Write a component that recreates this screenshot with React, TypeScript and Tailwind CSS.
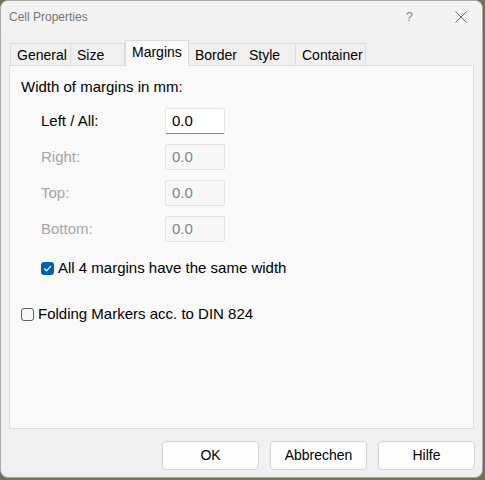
import React from 'react';

const tabs = [
  { label: 'General', w: 'w-[61px]', border: 'border-l border-r' },
  { label: 'Size', w: 'w-[54px]', border: 'border-r' },
  { label: 'Margins', w: 'w-[64px]', active: true },
  { label: 'Border', w: 'w-[54px]', border: '' },
  { label: 'Style', w: 'w-[53px]', border: 'border-r' },
  { label: 'Container', w: 'w-[70px]', border: 'border-r' },
];

const rows = [
  { label: 'Left / All:', enabled: true },
  { label: 'Right:', enabled: false },
  { label: 'Top:', enabled: false },
  { label: 'Bottom:', enabled: false },
];

const CheckMark = () => (
  <svg width="9" height="9" viewBox="0 0 9 9" fill="none">
    <path d="M1.5 4.8 L3.6 6.8 L7.6 2.3" stroke="white" strokeWidth="1.2" strokeLinecap="round" strokeLinejoin="round" />
  </svg>
);

export default function App() {
  return (
    <div className="w-[485px] h-[480px] bg-[#6d7459] font-['Liberation_Sans',Arial,sans-serif]">
      <div className="w-[483px] h-[478px] bg-[#f0f0f0] border border-[#a9a9a9] rounded-[8px] flex flex-col overflow-hidden">
        {/* title bar */}
        <div className="h-[31px] flex items-center pl-[8px] bg-[#f3f3f3] text-[12px] text-[#767676]">
          <span>Cell Properties</span>
          <span className="ml-auto mr-[42px] text-[13px] text-[#8a8a8a]">?</span>
          <svg width="12" height="12" viewBox="0 0 12 12" className="mr-[15px]">
            <path d="M0.5 0.5 L11.5 11.5 M11.5 0.5 L0.5 11.5" stroke="#666" strokeWidth="1" />
          </svg>
        </div>

        {/* tabs */}
        <div className="ml-[9px] mt-[8px] h-[25px] flex items-end text-[14px] text-black">
          {tabs.map((t) =>
            t.active ? (
              <div
                key={t.label}
                className={`${t.w} h-[26px] -mb-px relative z-10 bg-[#f9f9f9] border border-b-0 border-[#dcdcdc] flex items-center pl-[6px] pb-[2px]`}
              >
                {t.label}
              </div>
            ) : (
              <div
                key={t.label}
                className={`${t.w} h-[22px] border-t ${t.border} border-[#dcdcdc] flex items-center pl-[6px] pt-[1px]`}
              >
                {t.label}
              </div>
            )
          )}
        </div>

        {/* page */}
        <div className="ml-[8px] mr-[8px] h-[364px] bg-[#f9f9f9] border border-[#dcdcdc] text-[15px] text-black flex flex-col">
          <div className="mt-[12px] pl-[11px] leading-[18px]">Width of margins in mm:</div>

          <div className="mt-[12px] flex flex-col gap-[10px] pl-[31px]">
            {rows.map((r) => (
              <div key={r.label} className="flex items-center h-[26px]">
                <span className={`w-[124px] ${r.enabled ? 'text-black' : 'text-[#a6a6a6]'}`}>{r.label}</span>
                <div
                  className={
                    r.enabled
                      ? 'w-[60px] h-[26px] bg-white border border-[#e5e5e5] border-b-[#8a8a8a] rounded-[2px] flex items-center pl-[6px] text-black'
                      : 'w-[60px] h-[26px] bg-[#f7f7f7] border border-[#e3e3e3] rounded-[2px] flex items-center pl-[6px] text-[#7c8593]'
                  }
                >
                  0.0
                </div>
              </div>
            ))}
          </div>

          <div className="mt-[17px] pl-[31px] h-[18px] flex items-center">
            <div className="w-[13px] h-[13px] rounded-[3px] bg-[#005fb8] flex items-center justify-center">
              <CheckMark />
            </div>
            <span className="ml-[4px]">All 4 margins have the same width</span>
          </div>

          <div className="mt-[28px] pl-[11px] h-[18px] flex items-center">
            <div className="w-[13px] h-[13px] rounded-[3px] bg-[#f7f7f7] border border-[#5c5c5c]" />
            <span className="ml-[4px]">Folding Markers acc. to DIN 824</span>
          </div>
        </div>

        {/* buttons */}
        <div className="mt-[12px] pr-[7px] flex justify-end gap-[11px] text-[14px] text-black">
          {['OK', 'Abbrechen', 'Hilfe'].map((b) => (
            <button
              key={b}
              className="w-[97px] h-[29px] bg-[#fdfdfd] border border-[#d3d3d3] rounded-[4px] flex items-center justify-center"
            >
              {b}
            </button>
          ))}
        </div>
      </div>
    </div>
  );
}
